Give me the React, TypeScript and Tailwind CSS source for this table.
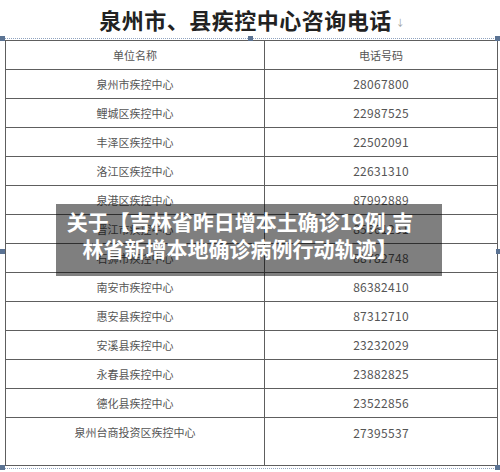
import React from "react";

const ROWS: { name: string; phone: string }[] = [
  { name: "泉州市疾控中心", phone: "28067800" },
  { name: "鲤城区疾控中心", phone: "22987525" },
  { name: "丰泽区疾控中心", phone: "22502091" },
  { name: "洛江区疾控中心", phone: "22631310" },
  { name: "泉港区疾控中心", phone: "87992889" },
  { name: "晋江市疾控中心", phone: "85661251" },
  { name: "石狮市疾控中心", phone: "88782748" },
  { name: "南安市疾控中心", phone: "86382410" },
  { name: "惠安县疾控中心", phone: "87312710" },
  { name: "安溪县疾控中心", phone: "23232029" },
  { name: "永春县疾控中心", phone: "23882825" },
  { name: "德化县疾控中心", phone: "23522856" },
];

const FONT = { fontFamily: '"Noto Sans CJK SC", "Noto Sans", sans-serif' };

function Handle({ className }: { className: string }) {
  return <div className={`absolute w-[5px] h-[5px] bg-[#5b7393] ${className}`} />;
}

export default function App() {
  return (
    <div className="relative w-[500px] h-[472px] overflow-hidden bg-white" style={FONT}>
      {/* Title */}
      <div className="h-[38px] flex items-center justify-center pl-[4px]">
        <span className="text-[22px] font-bold tracking-[0.5px] text-[#222] leading-none">
          泉州市、县疾控中心咨询电话
        </span>
        <span className="ml-[4px] mt-[6px] text-[9px] text-[#999] leading-none">↓</span>
      </div>

      {/* selection frame top */}
      <div className="h-[2px] border-t border-dotted border-[#8fa3bf]" />

      {/* Table */}
      <div className="ml-[5px] mr-[2px] border border-[#5e5e5e] text-[#555]">
        <div className="grid grid-cols-[259px_1fr] h-[29px] border-b border-[#5e5e5e] text-[11px]">
          <div className="flex items-center justify-center border-r border-[#5e5e5e]">单位名称</div>
          <div className="flex items-center justify-center">电话号码</div>
        </div>
        {ROWS.map((r) => (
          <div
            key={r.name}
            className="grid grid-cols-[259px_1fr] h-[29px] border-b border-[#5e5e5e]"
          >
            <div className="flex items-center justify-center border-r border-[#5e5e5e] text-[11px]">
              {r.name}
            </div>
            <div className="flex items-center justify-center text-[12px] tracking-[0.3px]">
              {r.phone}
            </div>
          </div>
        ))}
        <div className="grid grid-cols-[259px_1fr] h-[47px]">
          <div className="flex justify-center pt-[6px] border-r border-[#5e5e5e] text-[11px]">
            泉州台商投资区疾控中心
          </div>
          <div className="flex justify-center pt-[6px] text-[12px] tracking-[0.3px]">27395537</div>
        </div>
      </div>

      {/* selection frame bottom */}
      <div className="mt-[2px] border-t border-dotted border-[#8fa3bf]" />

      {/* frame handles */}
      <Handle className="left-0 top-[36px]" />
      <Handle className="left-[248px] top-[36px]" />
      <Handle className="left-[495px] top-[36px]" />
      <Handle className="left-0 top-[249px]" />
      <Handle className="left-[496px] top-[249px]" />
      <Handle className="left-0 top-[465px]" />
      <Handle className="left-[495px] top-[465px]" />

      {/* Caption overlay */}
      <div className="absolute left-[56px] top-[204px] w-[386px] h-[72px] bg-black/50 pt-[4px] pr-[18px] text-center text-white font-bold text-[21px] leading-[27px]">
        关于【吉林省昨日增本土确诊19例,吉
        <br />
        林省新增本地确诊病例行动轨迹】
      </div>
    </div>
  );
}
